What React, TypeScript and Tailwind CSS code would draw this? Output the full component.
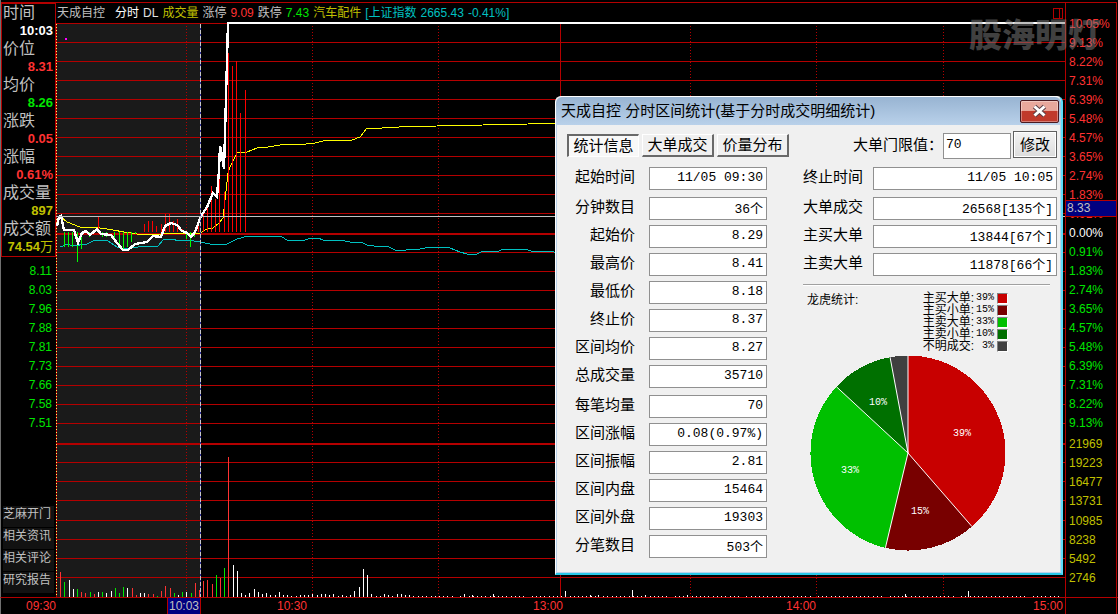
import React from "react";

const sideInfo = [
  { label: "时间", value: "10:03", color: "text-white" },
  { label: "价位", value: "8.31", color: "text-[#ff3232]" },
  { label: "均价", value: "8.26", color: "text-[#00e600]" },
  { label: "涨跌", value: "0.05", color: "text-[#ff3232]" },
  { label: "涨幅", value: "0.61%", color: "text-[#ff3232]" },
  { label: "成交量", value: "897", color: "text-[#c0c000]" },
  { label: "成交额", value: "74.54", unit: "万", color: "text-[#c0c000]" },
];

const lowPrices = ["8.11", "8.03", "7.96", "7.88", "7.81", "7.73", "7.66", "7.58", "7.51"];
const sideButtons = ["芝麻开门", "相关资讯", "相关评论", "研究报告"];

const percents: [string, string][] = [
  ["10.05%", "text-[#ff3232]"],
  ["9.13%", "text-[#ff3232]"],
  ["8.22%", "text-[#ff3232]"],
  ["7.31%", "text-[#ff3232]"],
  ["6.39%", "text-[#ff3232]"],
  ["5.48%", "text-[#ff3232]"],
  ["4.57%", "text-[#ff3232]"],
  ["3.65%", "text-[#ff3232]"],
  ["2.74%", "text-[#ff3232]"],
  ["1.83%", "text-[#ff3232]"],
  ["0.91%", "text-[#ff3232]"],
  ["0.00%", "text-white"],
  ["0.91%", "text-[#00e600]"],
  ["1.83%", "text-[#00e600]"],
  ["2.74%", "text-[#00e600]"],
  ["3.65%", "text-[#00e600]"],
  ["4.57%", "text-[#00e600]"],
  ["5.48%", "text-[#00e600]"],
  ["6.39%", "text-[#00e600]"],
  ["7.31%", "text-[#00e600]"],
  ["8.22%", "text-[#00e600]"],
  ["9.13%", "text-[#00e600]"],
];
const volumes = ["21969", "19223", "16477", "13731", "10985", "8238", "5492", "2746"];

const leftFields: [string, string][][] = [
  [["起始时间", "11/05 09:30"]],
  [
    ["分钟数目", "36个"],
    ["起始价", "8.29"],
    ["最高价", "8.41"],
    ["最低价", "8.18"],
    ["终止价", "8.37"],
    ["区间均价", "8.27"],
    ["总成交量", "35710"],
  ],
  [
    ["每笔均量", "70"],
    ["区间涨幅", "0.08(0.97%)"],
    ["区间振幅", "2.81"],
    ["区间内盘", "15464"],
    ["区间外盘", "19303"],
    ["分笔数目", "503个"],
  ],
];
const rightFields: [string, string][][] = [
  [["终止时间", "11/05 10:05"]],
  [
    ["大单成交", "26568[135个]"],
    ["主买大单", "13844[67个]"],
    ["主卖大单", "11878[66个]"],
  ],
];

const legend: [string, string, string][] = [
  ["主买大单:", "39%", "bg-[#c80000]"],
  ["主买小单:", "15%", "bg-[#780000]"],
  ["主卖大单:", "33%", "bg-[#00c000]"],
  ["主卖小单:", "10%", "bg-[#007000]"],
  ["不明成交:", "3%", "bg-[#404040]"],
];

/* ---- intraday chart ---- */

const thinLines = [
  42, 61, 80, 99, 118, 137, 156, 175, 194, 213, 252, 271, 290, 309, 328, 347, 366, 385, 404, 423, 462, 481, 500, 520,
  539, 558, 577,
];
const dottedColumns = [186, 312, 438, 690, 816, 943];

const RED = "#ff3232";
const GREEN = "#00e600";
const WHITE = "#ffffff";

const pricePoints =
  "57,226 59,217 61,216 64,230 74,230 78,243 82,233 86,231 90,235 97,229 101,234 111,235 117,243 123,250 128,250 135,244 147,242 153,236 161,237 165,226 171,223 177,225 182,231 187,233 191,237 195,232 201,216 207,207 213,193 217,197 219,170 220,146 222,156 224,169 226,97 227,60 228,22";
const averagePoints =
  "61,217 67,222 80,227 100,228 113,230 124,232 137,234 157,235 167,233 200,233 207,229 213,228 219,223 223,218 225,200 228,173 230,167 237,153 247,152 257,148 268,147 286,144 306,144 315,143 323,141 336,140 352,140 360,137 364,132 367,128 382,128 399,127 437,126 483,125 528,124 560,123";
const indexPoints =
  "60,247 68,244 72,246 87,244 95,240 108,241 117,247 124,249 130,248 147,246 158,246 164,239 171,239 180,241 187,240 200,242 210,244 227,244 237,239 248,236 260,236 266,237 271,236 282,237 287,240 302,241 308,239 318,238 323,240 340,240 350,242 361,242 367,245 381,247 387,246 395,250 406,250 411,249 415,250 430,247 450,248 460,252 467,254 477,254 483,251 497,252 503,249 508,250 514,249 519,250 525,249 531,251 547,251 554,252 560,252";

const redTicks: [number, number][] = [
  [98, 217], [144, 224], [148, 221], [152, 221], [156, 226], [161, 224], [165, 214], [169, 214], [173, 221], [177, 219],
  [182, 229], [198, 224], [203, 211], [207, 204], [211, 186], [215, 199], [219, 160], [224, 192], [228, 53], [232, 66],
  [236, 61], [240, 113], [245, 90],
];
const greenTicks: [number, number][] = [
  [64, 247], [68, 247], [72, 247], [77, 262], [81, 249], [89, 237], [102, 237], [106, 237], [114, 242], [119, 247],
  [123, 250], [127, 247], [131, 242], [135, 234], [186, 239], [190, 247], [194, 237],
];

const volumeBars: [number, number, string][] = [
  [60, 25, RED], [64, 15, GREEN], [69, 17, WHITE], [73, 8, WHITE], [77, 8, GREEN], [81, 5, RED], [85, 4, RED],
  [90, 5, GREEN], [94, 3, RED], [98, 5, WHITE], [102, 5, GREEN], [106, 4, WHITE], [111, 6, WHITE], [115, 9, GREEN],
  [119, 4, GREEN], [123, 10, GREEN], [127, 9, WHITE], [132, 9, RED], [136, 2, RED], [140, 4, WHITE], [144, 4, WHITE],
  [148, 3, RED], [153, 3, RED], [157, 1, GREEN], [161, 6, RED], [165, 11, RED], [170, 9, RED], [174, 4, GREEN],
  [178, 2, WHITE], [182, 5, GREEN], [186, 5, WHITE], [191, 4, GREEN], [195, 14, RED], [199, 7, RED], [203, 16, RED],
  [207, 17, RED], [212, 13, RED], [216, 22, GREEN], [220, 19, RED], [224, 29, GREEN], [228, 140, RED],
  [233, 32, WHITE], [237, 26, WHITE], [241, 4, WHITE], [245, 2, WHITE], [249, 4, WHITE], [254, 8, WHITE],
  [258, 5, WHITE], [262, 3, WHITE], [266, 4, WHITE], [270, 2, WHITE], [275, 2, WHITE], [279, 5, WHITE],
  [283, 2, WHITE], [287, 2, WHITE], [291, 1, WHITE], [296, 1, WHITE], [300, 2, WHITE], [304, 2, WHITE],
  [308, 2, WHITE], [312, 3, WHITE], [317, 2, WHITE], [321, 3, WHITE], [325, 3, WHITE], [329, 2, WHITE],
  [333, 3, WHITE], [338, 1, WHITE], [342, 2, WHITE], [346, 1, WHITE], [350, 2, WHITE], [354, 6, WHITE],
  [359, 10, WHITE], [363, 28, WHITE], [367, 22, WHITE], [371, 3, WHITE], [376, 1, WHITE], [380, 1, WHITE],
  [384, 3, WHITE], [388, 2, WHITE], [392, 1, WHITE], [397, 3, WHITE], [401, 3, WHITE], [405, 2, WHITE],
  [409, 2, WHITE], [413, 1, WHITE], [464, 3, WHITE], [472, 2, WHITE], [493, 3, WHITE], [565, 6, WHITE],
  [590, 2, WHITE], [598, 2, WHITE], [632, 7, WHITE], [645, 2, WHITE], [687, 2, WHITE], [905, 3, WHITE],
  [968, 6, WHITE],
];
const quietBars = Array.from({ length: 153 }, (_, i) => 418 + Math.round(i * 4.21)).filter((_, i) => i % 17 !== 9);

function IntradayChart() {
  return (
    <svg
      className="block min-h-[575px] w-full flex-1"
      viewBox="56 22 1009 575"
      preserveAspectRatio="none"
      shapeRendering="crispEdges"
      role="img"
      aria-label="分时走势图"
    >
      <rect x="57" y="24" width="143" height="573" fill="#1a1a1a" />
      {thinLines.map((y) => (
        <rect key={y} x="56" y={y} width="1009" height="1" fill="#b40000" />
      ))}
      <rect x="56" y="23" width="172" height="1" fill="#b40000" />
      <rect x="56" y="233" width="1009" height="2" fill="#b40000" />
      <rect x="56" y="443" width="1009" height="2" fill="#b40000" />
      {dottedColumns.map((x) => (
        <path key={x} d={`M${x + 0.5} 26V597`} stroke="#b40000" strokeDasharray="1 2" />
      ))}
      <rect x="560" y="24" width="1" height="573" fill="#b40000" />
      <rect x="56" y="23" width="1" height="574" fill="#b40000" />
      <path d="M56.5 24V597" stroke="#ffff60" strokeDasharray="1 2" />

      <g fill="none">
        <polyline points={indexPoints} stroke="#00c0c0" strokeWidth="1" />
        <polyline points={averagePoints} stroke="#ffff00" strokeWidth="1" />
        {redTicks.map(([x, y]) => (
          <rect key={x} x={x} y={y} width="1" height={232 - y} fill="#ff0000" />
        ))}
        {greenTicks.map(([x, y]) => (
          <rect key={x} x={x} y="232" width="1" height={y - 232} fill="#00ff00" />
        ))}
        <polyline points={pricePoints} stroke="#ffffff" strokeWidth="2.4" />
        <rect x="228" y="22" width="837" height="2" fill="#ffffff" />
      </g>

      {volumeBars.map(([x, h, color]) => (
        <rect key={x} x={x} y={597 - h} width="1" height={h} fill={color} />
      ))}
      {quietBars.map((x) => (
        <rect key={x} x={x} y="596" width="1" height="1" fill="#ffffff" />
      ))}

      <rect x="56" y="216" width="1009" height="1" fill="#c0c0c0" />
      <rect x="200" y="24" width="1" height="573" fill="#3030a0" />
      <path d="M200.5 24V597" stroke="#c8c8c8" strokeDasharray="4 2" />
      <rect x="65" y="38" width="2" height="2" fill="#ff00ff" />
    </svg>
  );
}

/* ---- pie ---- */

const slices = [
  { from: 0, to: 139, color: "#c80000", label: "39%", x: 54, y: -21 },
  { from: 139, to: 193.4, color: "#780000", label: "15%", x: 12, y: 57 },
  { from: 193.4, to: 312.8, color: "#00c000", label: "33%", x: -58, y: 16 },
  { from: 312.8, to: 349.4, color: "#007000", label: "10%", x: -30, y: -52 },
  { from: 349.4, to: 360, color: "#404040", label: "", x: 0, y: 0 },
];

function rim(angle: number) {
  const a = (angle * Math.PI) / 180;
  return `${(97.5 * Math.sin(a)).toFixed(2)} ${(-97.5 * Math.cos(a)).toFixed(2)}`;
}

function Pie() {
  return (
    <svg className="ml-[7px] mt-[3px] block h-[196px] w-[196px]" viewBox="-98 -98 196 196" role="img" aria-label="龙虎统计">
      {slices.map((s) => (
        <path
          key={s.from}
          d={`M0 0L${rim(s.from)}A97.5 97.5 0 0 1 ${rim(s.to)}Z`}
          fill={s.color}
          shapeRendering="crispEdges"
        />
      ))}
      {slices.map((s) => (
        <path key={s.from} d={`M0 0L${rim(s.from)}`} stroke="#ffffff" strokeWidth="1" />
      ))}
      {slices.map((s) => (
        <text
          key={s.from}
          x={s.x}
          y={s.y + 4}
          textAnchor="middle"
          fill="#ffffff"
          className="font-['Liberation_Mono',monospace] text-[10px]"
        >
          {s.label}
        </text>
      ))}
    </svg>
  );
}

/* ---- dialog ---- */

function FieldGroups({ groups, width }: { groups: [string, string][][]; width: string }) {
  return (
    <div className="flex flex-col gap-[7px]">
      {groups.map((group) => (
        <div key={group[0][0]} className="flex flex-col gap-[5px]">
          {group.map(([label, value]) => (
            <div key={label} className="flex h-[23px] items-start">
              <label htmlFor={label} className="w-[60px] text-right text-[15px] leading-[20px]">
                {label}
              </label>
              <input
                id={label}
                readOnly
                value={value}
                className={`ml-auto h-[23px] ${width} border border-[#909090] bg-white pb-[2px] pr-[3px] text-right font-['Liberation_Mono','Noto_Sans_CJK_SC',monospace] text-[13px] outline-none`}
              />
            </div>
          ))}
        </div>
      ))}
    </div>
  );
}

function StatsDialog() {
  return (
    <section
      aria-label="分时区间统计"
      className="absolute right-[55px] top-[96px] w-[508px] rounded-t-md border-b-2 border-l border-r-2 border-t border-b-[#28c8e8] border-l-white border-r-[#5cdcfa] border-t-white bg-[#f0f0f0] text-black"
    >
      <header className="flex h-[28px] items-center rounded-t-md bg-linear-to-b from-[#98b4d2] to-[#b9d1ea] pl-[5px] pr-[2px]">
        <h1 className="flex-1 whitespace-pre text-[15px] leading-[28px]">天成自控 分时区间统计(基于分时成交明细统计)</h1>
        <button
          type="button"
          aria-label="关闭"
          className="flex h-[23px] w-[39px] items-center justify-center rounded-[2px] border border-[#4b1a20] bg-linear-to-b from-[#e8a89c] from-45% to-[#c0392b] to-50% shadow-[inset_0_0_0_1px_rgba(255,255,255,0.35)]"
        >
          <svg className="h-[14px] w-[17px]" viewBox="0 0 17 14">
            <path d="M3.5 2.5L13.5 11.5M13.5 2.5L3.5 11.5" stroke="#5a4048" strokeWidth="5" />
            <path d="M3.5 2.5L13.5 11.5M13.5 2.5L3.5 11.5" stroke="#ffffff" strokeWidth="3" />
          </svg>
        </button>
      </header>

      <div className="flex h-[448px] flex-col border-b border-l border-r border-[#b9d1ea] pl-[10px] pr-[3px] pt-[6px]">
        <div className="flex items-start">
          <div role="tablist" className="mt-[3px] flex gap-[3px]">
            <button
              type="button"
              role="tab"
              aria-selected="true"
              className="h-[23px] w-[72px] border-b border-l-2 border-r border-t-2 border-b-white border-l-[#696969] border-r-white border-t-[#696969] bg-[#f8f8f8] text-[15px] leading-[18px]"
            >
              统计信息
            </button>
            {["大单成交", "价量分布"].map((t) => (
              <button
                key={t}
                type="button"
                role="tab"
                aria-selected="false"
                className="h-[23px] w-[72px] border-b-2 border-l border-r-2 border-t border-b-[#696969] border-l-white border-r-[#696969] border-t-white bg-[#f0f0f0] text-[15px] leading-[20px]"
              >
                {t}
              </button>
            ))}
          </div>
          <label htmlFor="limit" className="ml-auto mt-[2px] text-[15px] leading-[24px]">
            大单门限值：
          </label>
          <input
            id="limit"
            defaultValue="70"
            className="mt-[2px] h-[26px] w-[68px] border border-[#909090] bg-white pb-[3px] pl-[2px] font-['Liberation_Mono',monospace] text-[13px] outline-none"
          />
          <button
            type="button"
            className="ml-[2px] h-[27px] w-[44px] border border-[#606060] bg-linear-to-b from-[#f4f4f4] to-[#dcdcdc] text-[15px] leading-[22px] shadow-[inset_0_0_0_1px_#fff]"
          >
            修改
          </button>
        </div>

        <div className="mt-[8px] flex justify-between pl-[8px]">
          <div className="w-[192px]">
            <FieldGroups groups={leftFields} width="w-[118px]" />
          </div>
          <div className="w-[254px]">
            <FieldGroups groups={rightFields} width="w-[184px]" />
            <hr className="mr-[7px] mt-[8px] border-b border-t border-b-white border-t-[#a0a0a0]" />
            <div className="mt-[6px] flex items-start pl-[4px]">
              <h2 className="text-[12px] leading-[16px]">龙虎统计:</h2>
              <ul className="ml-auto mr-[49px]">
                {legend.map(([name, value, color]) => (
                  <li key={name} className="flex h-[12px] items-center text-[12px] leading-[12px]">
                    <span>{name}</span>
                    <span className="ml-auto pl-[2px] font-['Liberation_Mono',monospace] text-[10px]">{value}</span>
                    <span
                      className={`ml-[3px] h-[11px] w-[11px] border border-b-white border-l-[#808080] border-r-white border-t-[#808080] ${color}`}
                    />
                  </li>
                ))}
              </ul>
            </div>
            <Pie />
          </div>
        </div>
      </div>
    </section>
  );
}

export default function App() {
  return (
    <main className="relative flex min-h-screen flex-col bg-black font-['Liberation_Sans','Noto_Sans_CJK_SC',sans-serif] text-[12px] text-[#c0c0c0]">
      <div className="flex flex-1">
        <aside className="flex w-[56px] flex-col border-l border-[#707070] pt-[2px]">
          <div className="flex flex-col border border-t-2 border-[#b40000] pl-[1px] pr-[2px]">
            {sideInfo.map((row) => (
              <React.Fragment key={row.label}>
                <div className="h-[18px] text-[16px] leading-[18px]">{row.label}</div>
                <div className={`h-[18px] whitespace-nowrap text-right text-[13px] font-bold leading-[18px] ${row.color}`}>
                  {row.value}
                  {row.unit && <span className="font-normal">{row.unit}</span>}
                </div>
              </React.Fragment>
            ))}
          </div>
          <div className="mt-[5px] flex flex-col pr-[4px] text-right text-[#00e600]">
            {lowPrices.map((p) => (
              <div key={p} className="h-[19px] leading-[19px]">
                {p}
              </div>
            ))}
          </div>
          <nav className="mb-[4px] mt-auto flex flex-col gap-px pl-[2px] pr-[2px]">
            {sideButtons.map((b) => (
              <button key={b} type="button" className="flex h-[21px] items-start whitespace-nowrap bg-[#121212] text-[12px] leading-[17px]">
                {b}
              </button>
            ))}
          </nav>
        </aside>

        <section className="flex min-w-0 flex-1 flex-col">
          <header className="relative mt-[2px] flex h-[20px] items-center gap-[4px] whitespace-nowrap border-t border-[#b40000] pl-[1px] pt-[2px] leading-[17px]">
            <h1 className="mr-[6px]">天成自控</h1>
            <span className="text-white">分时</span>
            <span className="text-[#e0e0e0]">DL</span>
            <span className="text-[#c0c000]">成交量</span>
            <span>涨停</span>
            <span className="text-[#ff3232]">9.09</span>
            <span>跌停</span>
            <span className="text-[#00e600]">7.43</span>
            <span className="text-[#c0c000]">汽车配件</span>
            <span className="text-[#00c0c0]">[上证指数</span>
            <span className="text-[#00c0c0]">2665.43</span>
            <span className="text-[#00c0c0]">-0.41%]</span>
            <span className="ml-auto mr-[2px] flex h-[11px] w-[10px] border border-[#b40000]">
              <span className="ml-auto mr-[2px] w-px bg-[#b40000]" />
            </span>
          </header>
          <IntradayChart />
        </section>

        <aside className="flex w-[53px]">
          <div className="relative mt-[2px] flex w-[52px] flex-col border-x border-t border-[#b40000] pl-[3px] pt-[12px]">
            {percents.map(([p, color], i) => (
              <div key={i} className={`h-[19px] leading-[19px] ${color}`}>
                {p}
              </div>
            ))}
            <div className="mt-px flex h-[154px] flex-col text-[#c0c000]">
              {volumes.map((v) => (
                <div key={v} className="flex flex-1 items-center">
                  {v}
                </div>
              ))}
            </div>
            <div className="absolute inset-x-0 top-[197px] h-[17px] border-y border-[#b40000] bg-[#000080] pl-px leading-[15px]">
              8.33
            </div>
          </div>
        </aside>
      </div>

      <footer className="flex h-[17px] border-l border-t border-l-[#707070] border-t-[#b40000] text-right leading-[16px] text-[#ff3232]">
        <span className="w-[55px]">09:30</span>
        <div className="grid min-w-0 flex-1 grid-cols-[145fr_106fr_256fr_253fr_249fr]">
          <span className="ml-auto w-[34px] border-x border-[#b40000] bg-[#000080] text-center text-[#c0c0c0]">10:03</span>
          <span>10:30</span>
          <span>13:00</span>
          <span>14:00</span>
          <span className="pr-[2px]">15:00</span>
        </div>
        <span className="w-[53px]">
          <span className="block h-full w-[52px] border-x border-[#b40000]" />
        </span>
      </footer>

      <div className="pointer-events-none absolute right-[17px] top-[12px] text-[33px] font-black leading-[48px] text-[#808080]/50">
        股海明灯
      </div>

      <StatsDialog />
    </main>
  );
}
